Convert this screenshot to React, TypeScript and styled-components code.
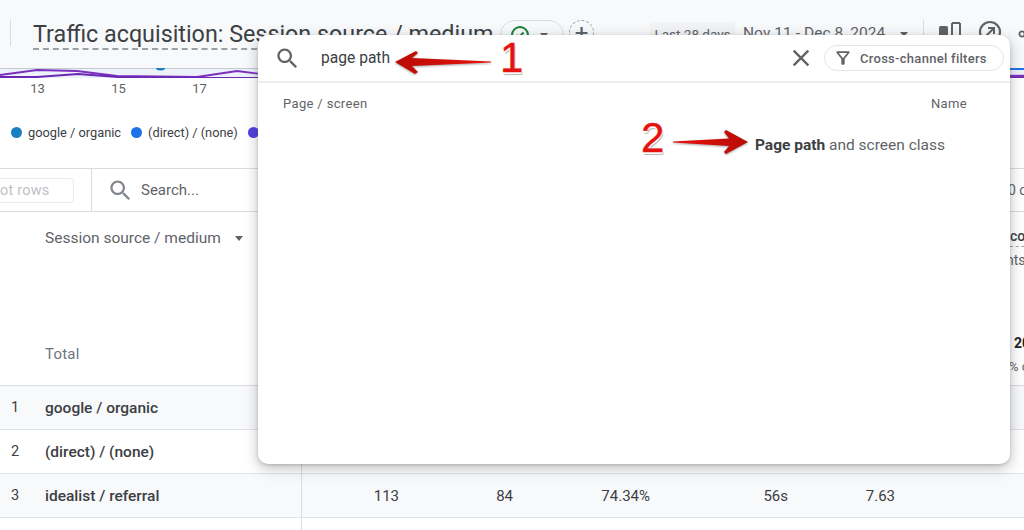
import React from "react";
import styled, { createGlobalStyle } from "styled-components";

const Global = createGlobalStyle`
  html, body { margin: 0; padding: 0; background: #fff; }
  body { font-family: Roboto, "Liberation Sans", sans-serif; }
`;

const Page = styled.div`
  position: relative;
  width: 1024px;
  height: 530px;
  overflow: hidden;
  background: #fff;
  color: #3c4043;
`;

/* ---------- report header ---------- */
const Header = styled.header`
  display: flex;
  align-items: flex-start;
  height: 68px;
  box-sizing: border-box;
  padding: 20px 0 0 10px;
  background: #f8f9fb;
  white-space: nowrap;
  > * {
    flex: none;
  }
`;
const VRule = styled.span<{ $h: number }>`
  display: block;
  flex: none;
  width: 1px;
  height: ${(p) => p.$h}px;
  background: #dadce0;
`;
const Title = styled.h1`
  margin: 0 0 0 22px;
  width: 462px;
  font: 400 23.3px/28px Roboto, sans-serif;
  color: #3c4043;
  border-bottom: 2px dashed #9aa0a6;
`;
const StatusPill = styled.span`
  display: flex;
  align-items: center;
  gap: 7px;
  box-sizing: border-box;
  margin-left: 5px;
  width: 64px;
  height: 30px;
  padding-left: 9px;
  border: 1px solid #dadce0;
  border-radius: 15px;
`;
const AddCircle = styled.span`
  display: flex;
  align-items: center;
  justify-content: center;
  box-sizing: border-box;
  margin-left: 5px;
  width: 25px;
  height: 25px;
  border: 1px dashed #9aa0a6;
  border-radius: 50%;
  font-size: 24px;
  line-height: 22px;
  color: #5f6368;
`;
const RangeTag = styled.span`
  margin-left: 56px;
  width: 85px;
  height: 24px;
  margin-top: 2px;
  background: #f1f3f4;
  font-size: 13.5px;
  line-height: 24px;
  text-align: center;
  color: #5f6368;
`;
const RangeDates = styled.span`
  margin-left: 8px;
  margin-top: 1px;
  font-size: 15.5px;
  line-height: 24px;
  letter-spacing: 0.05px;
  color: #5f6368;
`;
const Caret = styled.span<{ $left: number; $top?: number }>`
  flex: none;
  width: 0;
  height: 0;
  margin-left: ${(p) => p.$left}px;
  margin-top: ${(p) => p.$top ?? 0}px;
  border: 4px solid transparent;
  border-top: 5px solid #5f6368;
  border-bottom: 0;
`;
const HeadDivider = styled(VRule)`
  margin-left: 15px;
`;
const HeadIcons = styled.span`
  display: flex;
  gap: 16px;
  margin-left: 14px;
  color: #5f6368;
`;

/* ---------- chart ---------- */
const ChartStrip = styled.svg`
  display: block;
  width: 1024px;
  height: 10px;
`;
const Axis = styled.div`
  display: flex;
  height: 34px;
  margin-left: -3px;
`;
const Tick = styled.span`
  width: 81px;
  text-align: center;
  font-size: 13px;
  line-height: 22px;
  color: #5f6368;
`;
const Legend = styled.div`
  display: flex;
  align-items: center;
  height: 56px;
  padding: 0 0 16px 11px;
  box-sizing: border-box;
  font-size: 12.8px;
  white-space: nowrap;
  color: #3c4043;
`;
const LegendItem = styled.span`
  display: flex;
  align-items: center;
  gap: 6px;
  margin-right: 10px;
`;
const Dot = styled.i<{ $c: string }>`
  display: block;
  width: 11px;
  height: 11px;
  border-radius: 50%;
  background: ${(p) => p.$c};
`;

/* ---------- toolbar ---------- */
const Toolbar = styled.div`
  display: flex;
  align-items: center;
  box-sizing: border-box;
  height: 44px;
  border-top: 1px solid #dadce0;
  border-bottom: 1px solid #dadce0;
`;
const PlotButton = styled.span`
  flex: none;
  box-sizing: border-box;
  width: 104px;
  height: 25px;
  margin-left: -30px;
  padding-left: 16px;
  border: 1px solid #e8eaed;
  border-radius: 4px;
  font-size: 14.5px;
  line-height: 24px;
  color: #bdc1c6;
  letter-spacing: 0.2px;
`;
const ToolRule = styled.span`
  flex: none;
  width: 1px;
  height: 42px;
  margin-left: 17px;
  background: #dadce0;
`;
const SearchSlot = styled.span`
  display: flex;
  align-items: center;
  gap: 7px;
  margin-left: 15px;
  font-size: 15px;
  color: #5f6368;
`;
const SearchGlyph = styled.span`
  display: flex;
  color: #80868b;
`;
const Paging = styled.span`
  margin-left: auto;
  width: 16px;
  white-space: nowrap;
  font-size: 14px;
  color: #5f6368;
`;

/* ---------- table ---------- */
const TableHead = styled.div`
  display: grid;
  grid-template-columns: 302px 1fr 14px;
  height: 174px;
  box-sizing: border-box;
  border-bottom: 1px solid #dadce0;
`;
const HeadLabelCell = styled.div`
  display: flex;
  flex-direction: column;
  justify-content: space-between;
  box-sizing: border-box;
  padding: 15px 0 20px 45px;
  border-right: 1px solid #dadce0;
`;
const SortLabel = styled.span`
  display: flex;
  align-items: center;
  font-size: 15.5px;
  line-height: 22px;
  color: #5f6368;
`;
const TotalLabel = styled.span`
  font-size: 15px;
  line-height: 22px;
  letter-spacing: 0.2px;
  color: #70757a;
`;
const ClippedCol = styled.div`
  display: flex;
  flex-direction: column;
  white-space: nowrap;
  font-size: 14px;
  padding-top: 14px;
`;
const ClipBold = styled.span`
  font-weight: 500;
  line-height: 20px;
  color: #3c4043;
  border-bottom: 1px dashed #9aa0a6;
  width: 20px;
  height: 20px;
`;
const ClipSub = styled.span`
  margin: 2px 0 0 -4px;
  line-height: 22px;
  color: #5f6368;
`;
const ClipTotal = styled.span`
  margin: 62px 0 0 4px;
  font-weight: 700;
  line-height: 20px;
  color: #202124;
`;
const ClipPct = styled.span`
  margin: 4px 0 0 -1px;
  font-size: 13px;
  line-height: 20px;
  color: #5f6368;
`;
const Row = styled.div<{ $shade?: boolean }>`
  display: flex;
  height: 44px;
  box-sizing: border-box;
  border-bottom: 1px solid #e0e3e7;
  background: ${(p) => (p.$shade ? "#f8f9fb" : "#fff")};
`;
const RowLabelCell = styled.div`
  display: flex;
  align-items: center;
  flex: none;
  box-sizing: border-box;
  width: 302px;
  padding-left: 11px;
  border-right: 1px solid #dadce0;
`;
const RowIndex = styled.span`
  width: 34px;
  font-size: 14.5px;
  color: #3c4043;
`;
const RowName = styled.span`
  font-size: 15.5px;
  font-weight: 500;
  color: #3c4043;
`;
const Metric = styled.span<{ $w: number }>`
  flex: none;
  display: flex;
  align-items: center;
  justify-content: flex-end;
  width: ${(p) => p.$w}px;
  font-size: 15px;
  color: #3c4043;
`;
const TailRule = styled.div`
  display: flex;
  height: 14px;
`;
const TailCell = styled.div`
  width: 301px;
  border-right: 1px solid #dadce0;
`;

/* ---------- overlay search panel ---------- */
const Panel = styled.section`
  position: absolute;
  left: 258px;
  top: 35px;
  width: 752px;
  height: 429px;
  background: #fff;
  border-radius: 10px;
  box-shadow: 0 4px 14px rgba(60, 64, 67, 0.35), 0 1px 3px rgba(60, 64, 67, 0.2);
`;
const PanelBar = styled.div`
  display: flex;
  align-items: center;
  height: 46px;
  border-bottom: 2px solid #eceef0;
  padding: 0 6px 0 16px;
  color: #5f6368;
`;
const QueryText = styled.span`
  margin-left: 20px;
  font-size: 15.6px;
  color: #3c4043;
`;
const CloseButton = styled.span`
  display: flex;
  margin-left: auto;
  color: #5f6368;
`;
const FilterChip = styled.span`
  display: flex;
  align-items: center;
  gap: 7px;
  box-sizing: border-box;
  width: 180px;
  height: 26px;
  margin-left: 9px;
  padding-left: 8px;
  border: 1px solid #e3e5e8;
  border-radius: 13px;
  font-size: 13px;
  font-weight: 500;
  letter-spacing: 0.28px;
  color: #5f6368;
`;
const ColumnHeads = styled.div`
  display: flex;
  justify-content: space-between;
  padding: 11px 43px 0 25px;
  font-size: 13px;
  line-height: 20px;
  letter-spacing: 0.35px;
  color: #5f6368;
`;
const ResultRow = styled.div`
  display: flex;
  justify-content: flex-end;
  padding: 20px 65px 0 0;
  font-size: 15.5px;
  line-height: 22px;
  color: #5f6368;
  b {
    font-weight: 700;
    color: #3c4043;
  }
`;

/* annotations laid over the panel */
const Callout = styled.span<{ $x: number; $y: number }>`
  position: absolute;
  left: ${(p) => p.$x}px;
  top: ${(p) => p.$y}px;
  font: 400 42px/42px "Liberation Sans", sans-serif;
  color: #e5130f;
  -webkit-text-stroke: 0.4px #e5130f;
  text-shadow: 0 1px 0 #fff, 0 2px 0 #fff, -1px -1px 0 #fff, 1px 3px 1px #b5b5b5;
`;
const ArrowSvg = styled.svg<{ $x: number; $y: number }>`
  position: absolute;
  left: ${(p) => p.$x}px;
  top: ${(p) => p.$y}px;
  overflow: visible;
  filter: drop-shadow(0 1px 1px rgba(0, 0, 0, 0.35));
`;

const Mat = ({ d, size = 24 }: { d: string; size?: number }) => (
  <svg width={size} height={size} viewBox="0 0 24 24" fill="currentColor"><path d={d} /></svg>
);
const SEARCH =
  "M15.5 14h-.79l-.28-.27C15.41 12.59 16 11.11 16 9.5 16 5.91 13.09 3 9.5 3S3 5.91 3 9.5 5.91 16 9.5 16c1.61 0 3.09-.59 4.23-1.57l.27.28v.79l5 4.99L20.49 19l-4.99-5zm-6 0C7.01 14 5 11.99 5 9.5S7.01 5 9.5 5 14 7.01 14 9.5 11.99 14 9.5 14z";
const CLOSE =
  "M19 6.41L17.59 5 12 10.59 6.41 5 5 6.41 10.59 12 5 17.59 6.41 19 12 13.41 17.59 19 19 17.59 13.41 12z";
const FILTER =
  "M7 6h10l-5.01 6.3L7 6zm-2.75-.39C6.27 8.2 10 13 10 13v6c0 .55.45 1 1 1h2c.55 0 1-.45 1-1v-6s3.72-4.8 5.74-7.39c.51-.66.04-1.61-.79-1.61H5.04c-.83 0-1.3.95-.79 1.61z";

export default function App() {
  return (
    <Page>
      <Global />
      <Header>
        <VRule $h={26} />
        <Title>Traffic acquisition: Session source / medium</Title>
        <StatusPill>
          <svg width="20" height="20" viewBox="0 0 20 20" fill="none">
            <circle cx="10" cy="10" r="8" stroke="#188038" strokeWidth="2" />
            <path d="M6.5 10l2.5 2.5 4.5-5" stroke="#188038" strokeWidth="2" />
          </svg>
          <Caret $left={3} />
        </StatusPill>
        <AddCircle>+</AddCircle>
        <RangeTag>Last 28 days</RangeTag>
        <RangeDates>Nov 11 - Dec 8, 2024</RangeDates>
        <Caret $left={15} $top={12} />
        <HeadDivider $h={26} />
        <HeadIcons>
          <svg width="24" height="24" viewBox="0 0 24 24" fill="none">
            <rect x="1" y="6" width="9" height="14" rx="1.5" fill="#5f6368" />
            <path d="M14 3v17M22 3v17M14 3h8" stroke="#5f6368" strokeWidth="2" />
          </svg>
          <svg width="24" height="24" viewBox="0 0 24 24" fill="none">
            <circle cx="12" cy="12" r="10" stroke="#5f6368" strokeWidth="2.2" />
            <path d="M8 16l8-8M10 8h6v6" stroke="#5f6368" strokeWidth="2" />
          </svg>
          <svg width="24" height="24" viewBox="0 0 24 24" fill="none">
            <circle cx="4" cy="14" r="2.6" stroke="#5f6368" strokeWidth="1.8" />
            <circle cx="10" cy="14" r="2.6" stroke="#5f6368" strokeWidth="1.8" />
          </svg>
        </HeadIcons>
      </Header>

      <ChartStrip viewBox="0 0 1024 10">
        <rect width="1024" height="10" fill="#edf1fb" />
        <path d="M0 0.5H1024" stroke="#c4cad2" />
        <path d="M156 0a4.5 2.5 0 0 0 9 0z" fill="#1a7fc1" />
        <path d="M0 7L37 2l40 1 40 5 80 1 40-6 40 5H1024" stroke="#7b2fbe" strokeWidth="1.8" fill="none" />
        <path d="M0 9l37 0 41-3 40 3 81 1H1024" stroke="#6a28b4" strokeWidth="1.8" fill="none" />
        <path d="M1010 1H1024" stroke="#1a73e8" strokeWidth="2" />
        <path d="M1010 8H1024" stroke="#7b2fbe" strokeWidth="2.4" />
      </ChartStrip>
      <Axis>
        <Tick>13</Tick>
        <Tick>15</Tick>
        <Tick>17</Tick>
      </Axis>
      <Legend>
        <LegendItem><Dot $c="#1a7fc1" />google / organic</LegendItem>
        <LegendItem><Dot $c="#1a73e8" />(direct) / (none)</LegendItem>
        <LegendItem><Dot $c="#4f3fe0" />idealist / referral</LegendItem>
      </Legend>

      <Toolbar>
        <PlotButton>Plot rows</PlotButton>
        <ToolRule />
        <SearchSlot>
          <SearchGlyph><Mat d={SEARCH} size={27} /></SearchGlyph>
          Search...
        </SearchSlot>
        <Paging>0 of</Paging>
      </Toolbar>

      <TableHead>
        <HeadLabelCell>
          <SortLabel>
            Session source / medium
            <Caret $left={14} />
          </SortLabel>
          <TotalLabel>Total</TotalLabel>
        </HeadLabelCell>
        <div />
        <ClippedCol>
          <ClipBold>co</ClipBold>
          <ClipSub>nts</ClipSub>
          <ClipTotal>20</ClipTotal>
          <ClipPct>% c</ClipPct>
        </ClippedCol>
      </TableHead>

      <Row $shade>
        <RowLabelCell><RowIndex>1</RowIndex><RowName>google / organic</RowName></RowLabelCell>
      </Row>
      <Row>
        <RowLabelCell><RowIndex>2</RowIndex><RowName>(direct) / (none)</RowName></RowLabelCell>
      </Row>
      <Row $shade>
        <RowLabelCell><RowIndex>3</RowIndex><RowName>idealist / referral</RowName></RowLabelCell>
        <Metric $w={97}>113</Metric>
        <Metric $w={114}>84</Metric>
        <Metric $w={137}>74.34%</Metric>
        <Metric $w={138}>56s</Metric>
        <Metric $w={107}>7.63</Metric>
      </Row>
      <TailRule><TailCell /></TailRule>

      <Panel>
        <PanelBar>
          <Mat d={SEARCH} size={27} />
          <QueryText>page path</QueryText>
          <CloseButton><Mat d={CLOSE} size={28} /></CloseButton>
          <FilterChip>
            <Mat d={FILTER} size={20} />
            Cross-channel filters
          </FilterChip>
        </PanelBar>
        <ColumnHeads>
          <span>Page / screen</span>
          <span>Name</span>
        </ColumnHeads>
        <ResultRow>
          <span><b>Page path</b> and screen class</span>
        </ResultRow>

        <ArrowSvg $x={135} $y={14} width="100" height="26" viewBox="0 0 100 26">
          <defs>
            <linearGradient id="a1" x1="0" x2="1" y1="0" y2="0">
              <stop offset="0" stopColor="#b80c05" />
              <stop offset="1" stopColor="#e8120c" />
            </linearGradient>
          </defs>
          <path d="M2 13L23 2l2 2-6 5 79 3.5v1L19 17l6 6-3 2z" fill="url(#a1)" />
        </ArrowSvg>
        <Callout $x={242} $y={2}>1</Callout>
        <ArrowSvg $x={415} $y={94} width="76" height="26" viewBox="0 0 76 26">
          <defs>
            <linearGradient id="a2" x1="0" x2="1" y1="0" y2="0">
              <stop offset="0" stopColor="#e8120c" />
              <stop offset="1" stopColor="#b80c05" />
            </linearGradient>
          </defs>
          <path d="M75 13L53 1l-2 2 5 6.5L0 12.5v1L56 17l-5 6 2 2z" fill="url(#a2)" />
        </ArrowSvg>
        <Callout $x={383} $y={82}>2</Callout>
      </Panel>
    </Page>
  );
}
